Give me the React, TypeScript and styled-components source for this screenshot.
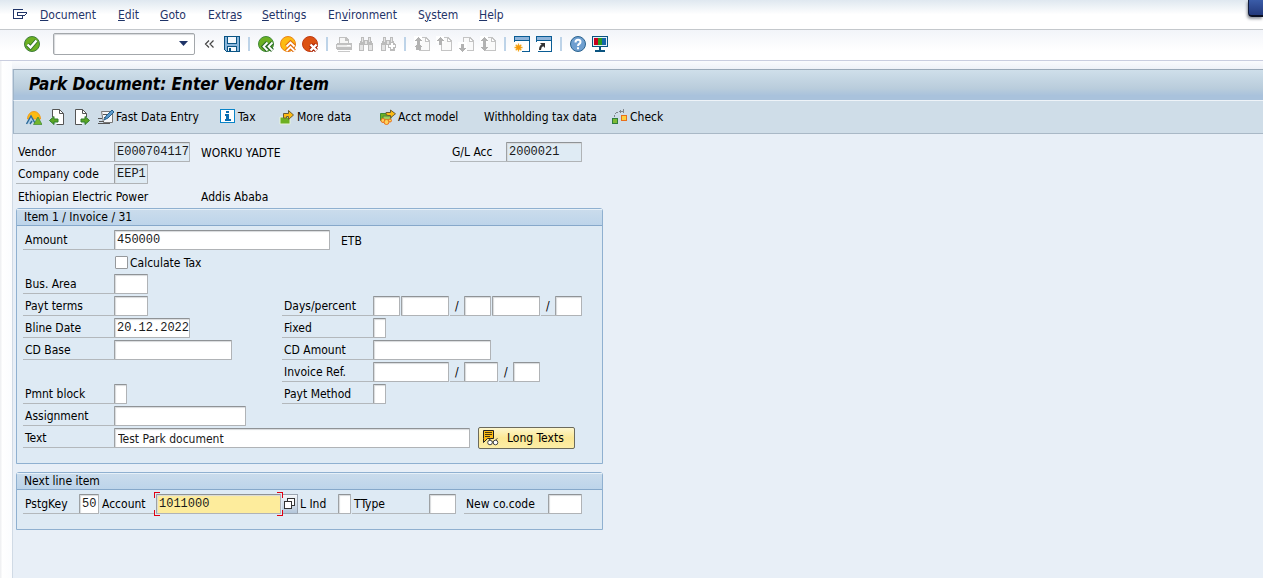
import React from "react";
import styled, { createGlobalStyle } from "styled-components";

const ui = `"DejaVu Sans Condensed", Tahoma, "Noto Sans", sans-serif`;
const mono = `"Liberation Mono", "Courier New", monospace`;

const GlobalStyle = createGlobalStyle`
  *, *::before, *::after { box-sizing: border-box; }
  html, body, #root { min-height: 100vh; }
  body { margin: 0; background: #e8eff7; font: 12px/16px ${ui}; color: #000; }
  button, input, select { font: inherit; color: inherit; margin: 0; }
  svg { display: block; flex: none; }
`;

const Screen = styled.div`
  position: relative;
  min-height: 100vh;
  display: flex;
  flex-direction: column;
  overflow: hidden;
`;

const MenuBar = styled.nav`
  display: flex;
  align-items: center;
  height: 30px;
  padding-left: 12px;
  background: linear-gradient(#dfe8f0, #fff 50%, #fff);
  border-bottom: 1px solid #c4c8cc;
  color: #1f3468;
`;

const MenuGlyph = styled.button`
  width: 28px;
  height: 22px;
  padding: 4px 0 0;
  border: 0;
  background: none;
  align-self: flex-start;
`;

const MenuItem = styled.button<{ $w: number }>`
  width: ${(p) => p.$w}px;
  padding: 0;
  border: 0;
  background: none;
  text-align: left;
  white-space: nowrap;
`;

const SystemBar = styled.div`
  display: flex;
  align-items: center;
  gap: 6px;
  height: 31px;
  padding: 0 24px 2px;
  background: linear-gradient(#f2f4f9, #fff 70%);
  border-bottom: 1px solid #c9cddf;
`;

const IconButton = styled.button`
  width: 16px;
  height: 16px;
  padding: 0;
  border: 0;
  background: none;
`;

const Divider = styled.span`
  width: 2px;
  height: 14px;
  margin: 0 2px;
  background: #bdd3e8;
`;

const CommandBox = styled.div`
  position: relative;
  width: 142px;
  height: 22px;
  margin: 0 1px 0 7px;
`;

const CommandSelect = styled.select`
  appearance: none;
  width: 100%;
  height: 100%;
  padding: 0 20px 0 4px;
  border: 1px solid #a3a7ab;
  border-radius: 2px;
  background: #fff;
  box-shadow: inset 1px 1px 1px #d5d8db;
`;

const CommandArrow = styled.svg`
  position: absolute;
  right: 7px;
  top: 8px;
  pointer-events: none;
`;

const Body = styled.main`
  flex: 1;
  display: flex;
  flex-direction: column;
  padding-left: 12px;
  background: linear-gradient(90deg, #f0f1f3 1px, #fff 2px, #fbfcfe 12px, transparent 12px);
`;

const Gap = styled.div`
  height: 8px;
  background: linear-gradient(#fafbfd, #eef1f7);
`;

const Work = styled.div`
  flex: 1;
  border-left: 1px solid #d0dae5;
`;

const TitleBar = styled.header`
  height: 32px;
  padding-left: 15px;
  background: linear-gradient(#cfdfea, #bacddc 60%, #a9c2dc 85%, #a9c2dc);
  border-top: 1px solid #9aa9b8;
  border-left: 1px solid #9fb4c8;
  border-bottom: 1px solid #eef3f8;
`;

const Title = styled.h1`
  margin: 0;
  font: italic bold 17px/28px ${ui};
  white-space: nowrap;
`;

const ActionBar = styled.div`
  display: flex;
  align-items: center;
  height: 33px;
  padding: 0 0 1px 12px;
  background: #cfdde8;
  border-left: 1px solid #9fb4c8;
  border-bottom: 1px solid #a9b8c6;
`;

const Action = styled.button<{ $w: number }>`
  display: flex;
  align-items: center;
  gap: 2px;
  width: ${(p) => p.$w}px;
  padding: 0;
  border: 0;
  background: none;
  white-space: nowrap;
`;

const Form = styled.form`
  width: 100%;
  max-width: 590px;
  padding: 7px 0 0 3px;
`;

const Head = styled.div`
  margin-bottom: 1px;
`;

const Row = styled.div`
  display: flex;
  align-items: center;
  height: 22px;
`;

const Half = styled.div<{ $w?: number }>`
  display: flex;
  align-items: center;
  height: 20px;
  ${(p) => (p.$w ? `width: ${p.$w}px;` : "")}
`;

const Label = styled.label<{ $w: number; $gap?: number }>`
  width: ${(p) => p.$w}px;
  height: 20px;
  margin-left: ${(p) => p.$gap || 0}px;
  padding: 2px 0 0 2px;
  line-height: 17px;
  border-bottom: 1px solid #b3b8bc;
  white-space: nowrap;
`;

const Slash = styled.span`
  width: 14px;
  height: 20px;
  margin-left: 1px;
  padding-left: 5px;
  line-height: 20px;
  border-bottom: 1px solid #b3b8bc;
`;

const Field = styled.input<{ $w: number; $gap?: number; $sans?: boolean; $hot?: boolean }>`
  width: ${(p) => p.$w}px;
  height: 20px;
  margin-left: ${(p) => p.$gap || 0}px;
  padding: ${(p) => (p.$sans ? "1px 0 0 3px" : "0 0 0 2px")};
  border: 1px solid #b0b3b6;
  border-top-color: #8f9396;
  border-left-color: #9da1a4;
  border-radius: 1px;
  outline: 0;
  color: #1a1a1a;
  font-family: ${(p) => (p.$sans ? ui : mono)};
  background: ${(p) => (p.$hot ? "#fdec9c" : "#fff")};
  box-shadow: inset 1px 1px 1px #d8dadc;
  &:read-only { background: #dfebf4; }
`;

const Note = styled.span<{ $x: number; $w?: number }>`
  margin-left: ${(p) => p.$x}px;
  padding-top: 2px;
  ${(p) => (p.$w ? `width: ${p.$w}px;` : "")}
  white-space: nowrap;
`;

const Group = styled.fieldset<{ $foot: number }>`
  min-width: 0;
  margin: 0 0 8px;
  padding: 0 0 ${(p) => p.$foot}px;
  border: 1px solid #8fb0d0;
  border-radius: 3px 3px 0 0;
  background: #deeaf4;
`;

const GroupTitle = styled.h2`
  height: 17px;
  margin: 0 0 3px;
  padding-left: 7px;
  font: 12px/15px ${ui};
  border-top: 1px solid #e6f0f8;
  border-bottom: 1px solid #86a8ca;
  background: linear-gradient(#cadcec, #bdd4ea);
`;

const Rows = styled.div`
  padding-left: 6px;
`;

const Check = styled.label`
  display: flex;
  align-items: center;
  gap: 2px;
  margin-left: 92px;
  padding-top: 1px;
`;

const Tick = styled.input`
  appearance: none;
  width: 13px;
  height: 13px;
  margin: 0;
  border: 1px solid #96999c;
  border-radius: 1px;
  background: #fff;
  &:checked { background: #35507c; }
`;

const LongTexts = styled.button`
  display: flex;
  align-items: center;
  gap: 8px;
  width: 97px;
  height: 22px;
  margin-left: 8px;
  padding: 0 0 0 3px;
  border: 1px solid #6b6a5c;
  border-radius: 2px;
  background: linear-gradient(#fdf6cc, #fbe794 50%, #fdeea6);
  white-space: nowrap;
`;

const Focus = styled.span`
  position: relative;
  display: flex;
  margin-left: 1px;
`;

const FocusMarks = styled.svg`
  position: absolute;
  left: -2px;
  top: -2px;
  pointer-events: none;
`;

const HelpButton = styled.button`
  width: 16px;
  height: 20px;
  margin-left: 1px;
  padding: 0 0 0 1px;
  border: 1px solid #9aa4b0;
  border-left: 0;
  background: linear-gradient(#f4f7fa, #b3c6da);
`;

const CornerTab = styled.div`
  position: absolute;
  right: 0;
  top: 0;
  width: 15px;
  height: 17px;
  background: linear-gradient(#3a5ca8, #23397c);
  border-left: 1px solid #101b3c;
  border-bottom: 2px solid #0a1024;
  border-radius: 0 0 0 4px;
  box-shadow: -1px 2px 3px #8f949c;
`;

const Svg = ({ children, smooth }: { children: React.ReactNode; smooth?: boolean }) => (
  <svg width="16" height="16" viewBox="0 0 16 16" fill="none" aria-hidden="true" shapeRendering={smooth ? "auto" : "crispEdges"}>
    {children}
  </svg>
);

const OkIcon = () => (
  <Svg smooth>
    <circle cx="8" cy="8" r="7.5" fill="#6cb022" stroke="#3f7d3c" />
    <path d="M3.5 8.5l3 3 6-7" stroke="#2f6b2a" strokeWidth="4" />
    <path d="M3.5 8.5l3 3 6-7" stroke="#fff" strokeWidth="2.4" />
  </Svg>
);
const SaveIcon = () => (
  <Svg>
    <path d="M0 0h16v16H2l-2-2z" fill="#0a5484" />
    <path d="M1 1h14v14H2l-1-1z" fill="#8ab6dc" />
    <path d="M3 1h10v7H3z" fill="#0a5484" />
    <path d="M4 1h8v6H4z" fill="#f4f8fc" />
    <path d="M3 10h10v6H3z" fill="#0a5484" />
    <path d="M4 11h8v4H4z" fill="#f4f8fc" />
    <path d="M5 12h2v3H5z" fill="#0a5484" />
  </Svg>
);
const BackIcon = () => (
  <Svg smooth>
    <circle cx="8" cy="8" r="7.5" fill="#6cb022" stroke="#3f8a3a" />
    <path d="M9.5 6.500l-4 4 4 4M14.500 6.500l-4 4 4 4" stroke="#2f6b2a" strokeWidth="4" />
    <path d="M9.500 6.500l-4 4 4 4M14.500 6.500l-4 4 4 4" stroke="#fff" strokeWidth="1.800" />
  </Svg>
);
const ExitIcon = () => (
  <Svg smooth>
    <circle cx="8" cy="8" r="7.500" fill="#fdbb12" stroke="#ea8418" />
    <path d="M6.500 10.500l4-4 4 4M6.500 15l4-4 4 4" stroke="#e06a10" strokeWidth="4" />
    <path d="M6.500 10.500l4-4 4 4M6.500 15l4-4 4 4" stroke="#fff" strokeWidth="1.800" />
  </Svg>
);
const CancelIcon = () => (
  <Svg smooth>
    <circle cx="8" cy="8" r="7.500" fill="#dc5212" stroke="#c03a10" />
    <path d="M8.500 8.500l6 6M14.500 8.500l-6 6" stroke="#a82408" strokeWidth="4.400" />
    <path d="M8.500 8.500l6 6M14.500 8.500l-6 6" stroke="#fff" strokeWidth="2.400" />
  </Svg>
);
const PrintIcon = () => (
  <Svg>
    <path d="M3 1h7l3 3v4H3z" fill="#c0c0c0" />
    <path d="M4 2h5v3h3v3H4z" fill="#f6f6f6" />
    <path d="M1 7h14l1 1v5l-1 1H1l-1-1V8z" fill="#c0c0c0" />
    <path d="M1 9h14v2H1z" fill="#ececec" />
    <path d="M11 9h3v1h-3z" fill="#fff" />
    <path d="M2 15h12v1H2z" fill="#c8c8c8" />
  </Svg>
);
const binoculars = "M3 1h3v3h4V1h3v3l2 4v7h-5V9H6v6H1V8l2-4z";
const FindIcon = () => (
  <Svg>
    <path d={binoculars} fill="#bcbcbc" />
    <path d="M4 2h1v4H4zM11 2h1v4h-1zM2 9h3v5H2zM11 9h3v5h-3z" fill="#e4e4e4" />
    <path d="M7 5h2v3H7z" fill="#e4e4e4" />
  </Svg>
);
const FindNextIcon = () => (
  <Svg>
    <path d={binoculars} fill="#bcbcbc" />
    <path d="M4 2h1v4H4zM11 2h1v4h-1zM2 9h3v5H2zM7 5h2v3H7z" fill="#e4e4e4" />
    <path d="M10 6h4v2h2v4h-2v2h-4v-2H8V8h2z" fill="#bcbcbc" />
    <path d="M11 7h2v2h2v2h-2v2h-2v-2H9V9h2z" fill="#fff" />
  </Svg>
);
const PageIcon = ({ kind }: { kind: "first" | "prev" | "next" | "last" }) => (
  <Svg>
    <path d="M5 1h7l4 4v10H5z" fill="#c4c4c4" />
    <path d="M6 2h5v4h4v8H6z" fill="#fafafa" />
    <path d="M12 3v2h2z" fill="#fff" />
    {kind === "next" ? (
      <>
        <path d="M0 6h9v10H0z" fill="#fff" />
        <path d="M3 8h3v4h3l-4.500 4L0 12h3z" fill="#b2b2b2" />
      </>
    ) : (
      <>
        <path d="M0 0h8v7H0z" fill="#fff" />
        <path d="M3 9V5H0l4.500-4L9 5H6v4z" fill="#b2b2b2" />
      </>
    )}
    {kind === "first" && <path d="M0 11l4.500-4L9 11H7v3H2v-3z" fill="#b2b2b2" />}
    {kind === "last" && <path d="M3 8h3v3h3l-4.500 4L0 11h3z" fill="#b2b2b2" />}
  </Svg>
);
const windowFrame = (
  <>
    <path d="M0 0h16v16H0z" fill="#0a5c94" />
    <path d="M1 1h14v3H1z" fill="#8fb4da" />
    <path d="M1 5h14v10H1z" fill="#fff" />
  </>
);
const SessionIcon = () => (
  <Svg smooth>
    {windowFrame}
    <path d="M0 6h8v10H0z" fill="#fff" />
    <path d="M4.500 7.500v8M.5 11.500h8M1.700 8.700l5.600 5.600M7.300 8.700l-5.600 5.600" stroke="#f5a81c" strokeWidth="1.300" />
    <circle cx="4.500" cy="11.500" r="2.300" fill="#f59a0c" />
  </Svg>
);
const ShortcutIcon = () => (
  <Svg smooth>
    {windowFrame}
    <path d="M0 6h2v10H0z" fill="#fff" />
    <path d="M4 14q0-4 3-5" stroke="#333" strokeWidth="2" />
    <path d="M4 7h5v5z" fill="#333" />
  </Svg>
);
const HelpIcon = () => (
  <Svg smooth>
    <circle cx="8" cy="8" r="7.500" fill="#6f9fd0" stroke="#2b648f" />
    <path d="M5.500 6.500q0-2.700 2.500-2.700t2.500 2.200q0 1.300-1.400 2-1.100.6-1.100 2" stroke="#fff" strokeWidth="2" />
    <path d="M7 11.300h2v2H7z" fill="#fff" />
  </Svg>
);
const LayoutIcon = () => (
  <Svg>
    <path d="M0 0h16v11H0z" fill="#0a5480" />
    <path d="M1 1h14v9H1z" fill="#e6f0f8" />
    <path d="M2 2h4v7H2z" fill="#c8001e" />
    <path d="M6 2h4v7H6z" fill="#2a9a20" />
    <path d="M10 2h4v7h-4z" fill="#1566a8" />
    <path d="M7 11h2v3H7zM3 14h10v2H3z" fill="#0a5480" />
  </Svg>
);

const OverviewIcon = () => (
  <Svg smooth>
    <path d="M1.500 10a6.500 7.500 0 1 1 13 0z" fill="#fdbb12" stroke="#f09a1c" />
    <path d="M0 15L5 6l4 7" fill="#a9cbe6" />
    <path d="M.5 15l4.500-8 4.500 8M4 15l2-3" stroke="#2c6a98" strokeWidth="1.400" />
    <path d="M7.500 15.500L12 8l4 7.500z" fill="#74b62a" stroke="#3e8a34" strokeWidth=".7" />
  </Svg>
);
const PrevItemIcon = () => (
  <Svg smooth>
    <path d="M3.500 8V.5h7l4 4v11h-7" fill="#fff" stroke="#555" />
    <path d="M10.500 .5v4h4" stroke="#555" />
    <path d="M.5 11.500L5 7.500v2.500h4v3H5v2.500z" fill="#5aa624" stroke="#2f7d2c" />
  </Svg>
);
const NextItemIcon = () => (
  <Svg smooth>
    <path d="M8 15.500H1.500V.5h7l4 4V8" fill="#fff" stroke="#555" />
    <path d="M8.500 .5v4h4" stroke="#555" />
    <path d="M15.500 11.500L11 7.500v2.500H7v3h4v2.500z" fill="#5aa624" stroke="#2f7d2c" />
  </Svg>
);
const FastEntryIcon = () => (
  <Svg smooth>
    <path d="M3.500 2.500h11v11h-9z" fill="#f5f7f9" stroke="#777" />
    <path d="M5 5.500h5M6 8.500h3M0 9.500h4M1 12.500h5M0 14.500h12" stroke="#555" />
    <path d="M6 11l2-4 6-6 2 2-6 6z" fill="#5c9acb" stroke="#24608e" />
  </Svg>
);
const InfoIcon = () => (
  <Svg>
    <path d="M0 0h15v14H0z" fill="#0a84c8" />
    <path d="M1 1h13v12H1z" fill="#fff" />
    <path d="M6 2h3v2H6zM5 5h4v5h2v2H5v-2h1V7H5z" fill="#0a6cb0" />
  </Svg>
);
const MoreIcon = () => (
  <Svg smooth>
    <path d="M1 8h10v7H1z" fill="#6cb022" stroke="#e8f4dc" />
    <path d="M4.500 9V4.500h5v-3l5 4.500-5 4.500v-3h-2V9z" fill="#fdbb12" stroke="#6b5c34" />
  </Svg>
);
const AcctIcon = () => (
  <Svg smooth>
    <path d="M.5 4.500h8v7h-8z" fill="#6cb022" stroke="#3e8a34" />
    <path d="M3 7h9l-2 4H3z" fill="#9fce5c" stroke="#4f8a34" />
    <path d="M6 5.500V3.500h4.500V1L15.500 4.800l-5 4V6.500H8z" fill="#fdbb12" stroke="#6b5c34" />
    <circle cx="3" cy="11.500" r="2" fill="#fdd35c" stroke="#e8701c" />
    <circle cx="6.500" cy="13" r="2.500" fill="#fdd35c" stroke="#e8701c" />
    <circle cx="10" cy="11.500" r="1.500" fill="#fdd35c" stroke="#e8701c" />
  </Svg>
);
const CheckIcon = () => (
  <Svg>
    <path d="M2 6h1v2H2zM3 4h1v1H3zM4 3h2v1H4zM7 2h5v1H7zM11 0h1v4h-1zM8 1h1v3H8z" fill="#80868c" />
    <path d="M0 9h6v6H0z" fill="#2f7d3c" />
    <path d="M1 10h4v4H1z" fill="#7cba34" />
    <path d="M9 6h6v6H9z" fill="#e8701c" />
    <path d="M10 7h4v4h-4z" fill="#fdd040" />
  </Svg>
);
const NotesIcon = () => (
  <svg width="17" height="16" viewBox="0 0 17 16" fill="none" aria-hidden="true">
    <path d="M1.500 .5h10v8h-6l-4 4v-4z" fill="#fdbb12" stroke="#222" />
    <path d="M3 2.500h7M3 4.500h7M3 6.500h5" stroke="#4a3a10" />
    <circle cx="8" cy="12.500" r="2.300" fill="#fff" stroke="#444" />
    <circle cx="13.500" cy="12.500" r="2.300" fill="#fff" stroke="#444" />
    <path d="M7 10l2-1.500M13.500 10l2-1.500M10 12h2" stroke="#444" />
  </svg>
);

const menus: [string, string, string, number][] = [
  ["", "D", "ocument", 78],
  ["", "E", "dit", 42],
  ["", "G", "oto", 48],
  ["Extr", "a", "s", 54],
  ["", "S", "ettings", 66],
  ["En", "v", "ironment", 90],
  ["S", "y", "stem", 61],
  ["", "H", "elp", 28],
];

const toolGroups: [string, React.ReactNode][][] = [
  [["Back", <BackIcon />], ["Exit", <ExitIcon />], ["Cancel", <CancelIcon />]],
  [["Print", <PrintIcon />], ["Find", <FindIcon />], ["Find next", <FindNextIcon />]],
  [
    ["First page", <PageIcon kind="first" />],
    ["Previous page", <PageIcon kind="prev" />],
    ["Next page", <PageIcon kind="next" />],
    ["Last page", <PageIcon kind="last" />],
  ],
  [["New session", <SessionIcon />], ["Create shortcut", <ShortcutIcon />]],
  [["Help", <HelpIcon />], ["Customize layout", <LayoutIcon />]],
];

const actions: [string, React.ReactNode, string, number][] = [
  ["Overview", <OverviewIcon />, "", 23],
  ["Previous item", <PrevItemIcon />, "", 25],
  ["Next item", <NextItemIcon />, "", 24],
  ["Fast Data Entry", <FastEntryIcon />, "Fast Data Entry", 122],
  ["Tax", <InfoIcon />, "Tax", 59],
  ["More data", <MoreIcon />, "More data", 101],
  ["Acct model", <AcctIcon />, "Acct model", 104],
  ["Withholding tax data", null, "Withholding tax data", 128],
  ["Check", <CheckIcon />, "Check", 56],
];

const Entry = ({ id, label, w, lw = 91, gap, value, sans, readOnly }: {
  id: string; label: string; w: number; lw?: number; gap?: number; value?: string; sans?: boolean; readOnly?: boolean;
}) => (
  <>
    <Label htmlFor={id} $w={lw} $gap={gap}>{label}</Label>
    <Field id={id} $w={w} $sans={sans} defaultValue={value} readOnly={readOnly} />
  </>
);

export default function App() {
  return (
    <Screen>
      <GlobalStyle />
      <MenuBar>
        <MenuGlyph aria-label="System menu">
          <svg width="16" height="13" viewBox="0 0 16 13" fill="#1f3468" shapeRendering="crispEdges">
            <path d="M1 2h10v1H1zM1 2h1v10H1zM1 11h10v1H1zM10 9h1v3h-1zM5 5h10v1H5zM14 5h1v2h-1zM13 7h1v1h-1zM12 8h1v1h-1zM5 8h7v1H5zM5 5h1v4H5z" />
          </svg>
        </MenuGlyph>
        {menus.map(([a, u, b, w]) => (
          <MenuItem key={a + u + b} $w={w}>{a}<u>{u}</u>{b}</MenuItem>
        ))}
      </MenuBar>
      <SystemBar>
        <IconButton aria-label="Enter"><OkIcon /></IconButton>
        <CommandBox>
          <CommandSelect aria-label="Command" defaultValue=""><option value="" /></CommandSelect>
          <CommandArrow width="9" height="5" viewBox="0 0 9 5"><path d="M0 0h9L4.500 5z" fill="#1f3468" /></CommandArrow>
        </CommandBox>
        <IconButton aria-label="Hide command field">
          <Svg smooth><path d="M7 4.500L3.500 8 7 11.500M11.500 4.500L8 8l3.500 3.500" stroke="#444" strokeWidth="1.200" /></Svg>
        </IconButton>
        <IconButton aria-label="Save"><SaveIcon /></IconButton>
        {toolGroups.map((group, i) => (
          <React.Fragment key={i}>
            <Divider />
            {group.map(([name, icon]) => (
              <IconButton key={name} aria-label={name}>{icon}</IconButton>
            ))}
          </React.Fragment>
        ))}
      </SystemBar>
      <Body>
        <Gap />
        <Work>
          <TitleBar><Title>Park Document: Enter Vendor Item</Title></TitleBar>
          <ActionBar>
            {actions.map(([name, icon, text, w]) => (
              <Action key={name} aria-label={name} $w={w}>{icon}{text}</Action>
            ))}
          </ActionBar>
          <Form onSubmit={(e) => e.preventDefault()}>
            <Head>
              <Row>
                <Entry id="vendor" label="Vendor" lw={98} w={76} value="E000704117" readOnly />
                <Note $x={11} $w={249}>WORKU YADTE</Note>
                <Entry id="gl" label="G/L Acc" lw={56} w={76} value="2000021" readOnly />
              </Row>
              <Row><Entry id="company" label="Company code" lw={98} w={34} value="EEP1" readOnly /></Row>
              <Row>
                <Note $x={2} $w={183}>Ethiopian Electric Power</Note>
                <Note $x={0}>Addis Ababa</Note>
              </Row>
            </Head>
            <Group $foot={14} aria-label="Item 1 / Invoice / 31">
              <GroupTitle>Item 1 / Invoice / 31</GroupTitle>
              <Rows>
                <Row><Entry id="amount" label="Amount" w={216} value="450000" /><Note $x={11}>ETB</Note></Row>
                <Row><Check><Tick type="checkbox" />Calculate Tax</Check></Row>
                <Row><Entry id="area" label="Bus. Area" w={34} /></Row>
                <Row>
                  <Half $w={259}><Entry id="terms" label="Payt terms" w={34} /></Half>
                  <Half>
                    <Entry id="days" label="Days/percent" w={27} />
                    <Field $w={48} $gap={1} aria-label="Percent 1" />
                    <Slash>/</Slash>
                    <Field $w={27} aria-label="Days 2" />
                    <Field $w={48} $gap={1} aria-label="Percent 2" />
                    <Slash>/</Slash>
                    <Field $w={27} aria-label="Days net" />
                  </Half>
                </Row>
                <Row>
                  <Half $w={259}><Entry id="bline" label="Bline Date" w={76} value="20.12.2022" /></Half>
                  <Half><Entry id="fixed" label="Fixed" w={13} /></Half>
                </Row>
                <Row>
                  <Half $w={259}><Entry id="base" label="CD Base" w={118} /></Half>
                  <Half><Entry id="cdamount" label="CD Amount" w={118} /></Half>
                </Row>
                <Row>
                  <Half $w={259} />
                  <Half>
                    <Entry id="ref" label="Invoice Ref." w={76} />
                    <Slash>/</Slash>
                    <Field $w={34} aria-label="Reference year" />
                    <Slash>/</Slash>
                    <Field $w={27} aria-label="Reference item" />
                  </Half>
                </Row>
                <Row>
                  <Half $w={259}><Entry id="block" label="Pmnt block" w={13} /></Half>
                  <Half><Entry id="method" label="Payt Method" w={13} /></Half>
                </Row>
                <Row><Entry id="assign" label="Assignment" w={132} /></Row>
                <Row>
                  <Entry id="text" label="Text" w={356} value="Test Park document" sans />
                  <LongTexts type="button"><NotesIcon />Long Texts</LongTexts>
                </Row>
              </Rows>
            </Group>
            <Group $foot={14} aria-label="Next line item">
              <GroupTitle>Next line item</GroupTitle>
              <Rows>
                <Row>
                  <Entry id="key" label="PstgKey" lw={56} w={20} value="50" />
                  <Label htmlFor="account" $w={55} $gap={1}>Account</Label>
                  <Focus>
                    <Field id="account" $w={125} $hot defaultValue="1011000" />
                    <FocusMarks width="129" height="24" viewBox="0 0 129 24" fill="none" stroke="#e00010" shapeRendering="crispEdges">
                      <path d="M6 .5H.5V6M123 .5h5.500V6M6 23.500H.5V18M123 23.500h5.500V18" />
                    </FocusMarks>
                  </Focus>
                  <HelpButton type="button" aria-label="Account search help">
                    <svg width="13" height="14" viewBox="0 0 13 14" shapeRendering="crispEdges">
                      <path d="M4 1h8v8H4z" fill="#333" />
                      <path d="M5 2h6v6H5z" fill="#fff" />
                      <path d="M1 4h8v8H1z" fill="#333" />
                      <path d="M2 5h6v6H2z" fill="#fff" />
                    </svg>
                  </HelpButton>
                  <Entry id="ind" label="L Ind" lw={40} w={13} />
                  <Entry id="ttype" label="TType" lw={77} gap={1} w={27} />
                  <Entry id="newco" label="New co.code" lw={84} gap={8} w={34} />
                </Row>
              </Rows>
            </Group>
          </Form>
        </Work>
      </Body>
      <CornerTab />
    </Screen>
  );
}
